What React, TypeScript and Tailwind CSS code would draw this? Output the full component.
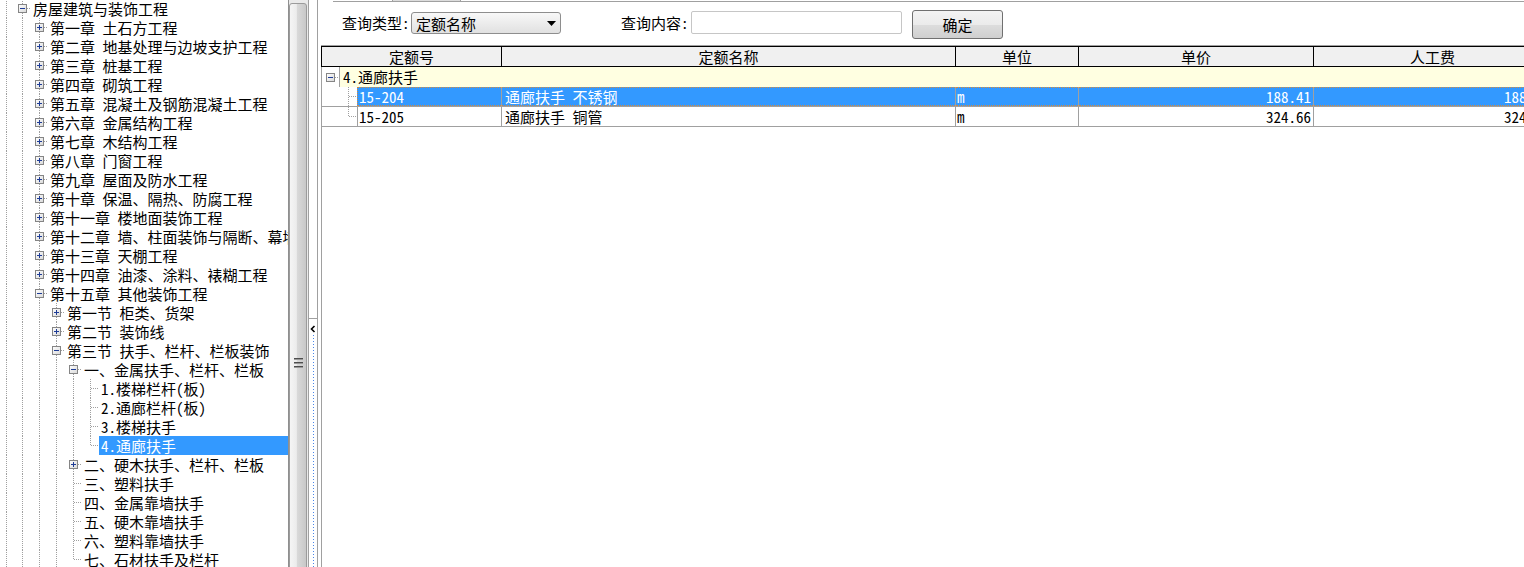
import React from 'react';

type TNode = { level: number; label: string; exp?: 'plus' | 'minus'; last?: boolean; selected?: boolean };

const tree: TNode[] = [
  { level: 0, label: '房屋建筑与装饰工程', exp: 'minus' },
  { level: 1, label: '第一章 土石方工程', exp: 'plus' },
  { level: 1, label: '第二章 地基处理与边坡支护工程', exp: 'plus' },
  { level: 1, label: '第三章 桩基工程', exp: 'plus' },
  { level: 1, label: '第四章 砌筑工程', exp: 'plus' },
  { level: 1, label: '第五章 混凝土及钢筋混凝土工程', exp: 'plus' },
  { level: 1, label: '第六章 金属结构工程', exp: 'plus' },
  { level: 1, label: '第七章 木结构工程', exp: 'plus' },
  { level: 1, label: '第八章 门窗工程', exp: 'plus' },
  { level: 1, label: '第九章 屋面及防水工程', exp: 'plus' },
  { level: 1, label: '第十章 保温、隔热、防腐工程', exp: 'plus' },
  { level: 1, label: '第十一章 楼地面装饰工程', exp: 'plus' },
  { level: 1, label: '第十二章 墙、柱面装饰与隔断、幕墙工程', exp: 'plus' },
  { level: 1, label: '第十三章 天棚工程', exp: 'plus' },
  { level: 1, label: '第十四章 油漆、涂料、裱糊工程', exp: 'plus' },
  { level: 1, label: '第十五章 其他装饰工程', exp: 'minus' },
  { level: 2, label: '第一节 柜类、货架', exp: 'plus' },
  { level: 2, label: '第二节 装饰线', exp: 'plus' },
  { level: 2, label: '第三节 扶手、栏杆、栏板装饰', exp: 'minus' },
  { level: 3, label: '一、金属扶手、栏杆、栏板', exp: 'minus' },
  { level: 4, label: '1.楼梯栏杆(板)' },
  { level: 4, label: '2.通廊栏杆(板)' },
  { level: 4, label: '3.楼梯扶手' },
  { level: 4, label: '4.通廊扶手', last: true, selected: true },
  { level: 3, label: '二、硬木扶手、栏杆、栏板', exp: 'plus' },
  { level: 3, label: '三、塑料扶手' },
  { level: 3, label: '四、金属靠墙扶手' },
  { level: 3, label: '五、硬木靠墙扶手' },
  { level: 3, label: '六、塑料靠墙扶手' },
  { level: 3, label: '七、石材扶手及栏杆', last: true },
];

const DOT = '#a0a0a0';

function Expander({ cx, cy, kind, id }: { cx: number; cy: number; kind: 'plus' | 'minus'; id: string }) {
  return (
    <g>
      <defs>
        <linearGradient id={id} x1="0" y1="0" x2="1" y2="1">
          <stop offset="0" stopColor="#ffffff" />
          <stop offset="1" stopColor="#d8d8d8" />
        </linearGradient>
      </defs>
      <rect x={cx - 3.5} y={cy - 3.5} width={8} height={8} fill={`url(#${id})`} stroke="#858585" />
      <line x1={cx - 2} x2={cx + 3} y1={cy + 0.5} y2={cy + 0.5} stroke="#1e3c96" />
      {kind === 'plus' && <line x1={cx + 0.5} x2={cx + 0.5} y1={cy - 2} y2={cy + 3} stroke="#1e3c96" />}
    </g>
  );
}

function LineCell({
  w,
  x,
  v,
  h,
  exp,
  id,
}: {
  w: number;
  x: number;
  v: 'full' | 'top' | 'none';
  h?: boolean;
  exp?: 'plus' | 'minus';
  id: string;
}) {
  return (
    <svg width={w} height={19} className="shrink-0" shapeRendering="crispEdges">
      {v !== 'none' && (
        <line x1={x + 0.5} x2={x + 0.5} y1={0} y2={v === 'full' ? 19 : 10} stroke={DOT} strokeDasharray="1 1" />
      )}
      {h && <line x1={x + 1} x2={w} y1={9.5} y2={9.5} stroke={DOT} strokeDasharray="1 1" />}
      {exp && <Expander cx={x} cy={9} kind={exp} id={id} />}
    </svg>
  );
}

function TreeRow({ node, idx }: { node: TNode; idx: number }) {
  const cells: React.ReactNode[] = [];
  cells.push(<LineCell key="m" w={14} x={6} v="full" id={`a${idx}m`} />);
  for (let k = 0; k < node.level; k++) {
    cells.push(<LineCell key={k} w={17} x={8} v="full" id={`a${idx}_${k}`} />);
  }
  cells.push(
    <LineCell key="own" w={17} x={8} v={node.last ? 'top' : 'full'} h exp={node.exp} id={`g${idx}`} />
  );
  return (
    <div className="flex h-[19px] whitespace-nowrap">
      {cells}
      <div
        className={
          node.selected
            ? 'min-w-0 flex-1 overflow-hidden bg-[#3399ff] pl-[2px] leading-[19px] text-white'
            : 'min-w-0 flex-1 overflow-hidden pl-[2px] leading-[19px] text-black'
        }
      >
        {node.label}
      </div>
    </div>
  );
}

function Tree() {
  return (
    <div className="h-full w-[288px] shrink-0 overflow-hidden bg-white">
      <div className="mt-[-1px] flex flex-col">
        {tree.map((n, i) => (
          <TreeRow key={i} node={n} idx={i} />
        ))}
      </div>
    </div>
  );
}

function ScrollBar() {
  return (
    <div className="h-full w-[19px] shrink-0 overflow-hidden bg-[#eaeaea]">
      <div className="mt-[3px] flex h-[720px] w-[18px] flex-col items-center rounded-[3px] border border-[#9b9b9b] bg-[linear-gradient(to_right,#f5f5f5_0%,#ececec_40%,#d9d9d9_45%,#c8c8c8_100%)] pt-[354px]">
        <svg width="9" height="11" shapeRendering="crispEdges">
          <rect x="0" y="0" width="9" height="1" fill="#4e4e4e" />
          <rect x="0" y="1" width="9" height="1" fill="#9a9a9a" />
          <rect x="0" y="4" width="9" height="1" fill="#4e4e4e" />
          <rect x="0" y="5" width="9" height="1" fill="#9a9a9a" />
          <rect x="0" y="8" width="9" height="1" fill="#4e4e4e" />
          <rect x="0" y="9" width="9" height="1" fill="#9a9a9a" />
        </svg>
      </div>
    </div>
  );
}

function Splitter() {
  return (
    <div className="flex h-full w-[8px] shrink-0 flex-col bg-white">
      <div className="h-[318px] shrink-0" />
      <div className="flex min-h-0 flex-1 flex-col border-t border-[#a0a0a0]">
        <svg width="8" height="16" className="shrink-0">
          <polyline points="5.5,7 2.5,10 5.5,13" fill="none" stroke="#000" strokeWidth="1.6" />
        </svg>
        <svg width="8" height="240" className="shrink-0" shapeRendering="crispEdges">
          <line x1="4.5" x2="4.5" y1="0" y2="240" stroke="#4a86e8" strokeDasharray="1 2" />
        </svg>
      </div>
    </div>
  );
}

const colW = ['w-[454px]', 'w-[123px]', 'w-[235px]', 'w-[238px]'];

function GridTreeCell({ v }: { v: 'full' | 'top' }) {
  return (
    <svg width="35" height="19" className="shrink-0" shapeRendering="crispEdges">
      <line x1="26.5" x2="26.5" y1="0" y2={v === 'full' ? 19 : 10} stroke={DOT} strokeDasharray="1 1" />
      <line x1="27" x2="35" y1="9.5" y2="9.5" stroke={DOT} strokeDasharray="1 1" />
    </svg>
  );
}

function Grid() {
  return (
    <div className="ml-[3px] mt-[6px] flex min-h-0 flex-1 flex-col overflow-hidden border-t border-[#a0a0a0]">
      {/* header */}
      <div className="flex h-[21px] w-[1231px] shrink-0 border-y border-l border-black bg-[#f0f0f0] leading-[19px] text-black">
        <div className="w-[180px] border-r border-black text-center">定额号</div>
        <div className="w-[454px] border-r border-black text-center">定额名称</div>
        <div className="w-[123px] border-r border-black text-center">单位</div>
        <div className="w-[235px] border-r border-black text-center">单价</div>
        <div className="w-[238px] border-r border-black text-center">人工费</div>
      </div>
      {/* group row */}
      <div className="flex h-[20px] w-[1231px] shrink-0 border-l border-[#a0a0a0]">
        <svg width="17" height="20" className="shrink-0" shapeRendering="crispEdges">
          <line x1="13" x2="17" y1="10.5" y2="10.5" stroke={DOT} strokeDasharray="1 1" />
          <Expander cx={8} cy={10} kind="minus" id="grp" />
        </svg>
        <div className="flex-1 border-l border-[#a0a0a0] bg-[#ffffe1] pl-[3px] leading-[20px] text-black">4.通廊扶手</div>
      </div>
      {/* row 1 selected */}
      <div className="flex h-[20px] w-[1231px] shrink-0 border-b border-l border-[#a0a0a0] leading-[17px]">
        <GridTreeCell v="full" />
        <div className="w-[145px] border-r border-[#a0a0a0]">
          <div className="h-full border-y border-l border-dotted border-[#d68a3c] bg-[#3399ff] pl-[1px] text-white">15-204</div>
        </div>
        <div className={`${colW[0]} border-r border-[#a0a0a0]`}>
          <div className="h-full border-y border-dotted border-[#d68a3c] bg-[#3399ff] pl-[3px] text-white">通廊扶手 不锈钢</div>
        </div>
        <div className={`${colW[1]} border-r border-[#a0a0a0]`}>
          <div className="h-full border-y border-dotted border-[#d68a3c] bg-[#3399ff] pl-[1px] text-white">m</div>
        </div>
        <div className={`${colW[2]} border-r border-[#a0a0a0]`}>
          <div className="h-full border-y border-dotted border-[#d68a3c] bg-[#3399ff] pr-[2px] text-right text-white">188.41</div>
        </div>
        <div className={`${colW[3]} border-r border-[#a0a0a0]`}>
          <div className="h-full border-y border-dotted border-[#d68a3c] bg-[#3399ff] pr-[2px] text-right text-white">188.41</div>
        </div>
      </div>
      {/* row 2 */}
      <div className="flex h-[20px] w-[1231px] shrink-0 border-b border-l border-[#a0a0a0] leading-[19px] text-black">
        <GridTreeCell v="top" />
        <div className="w-[145px] border-x border-[#a0a0a0] pl-[1px]">15-205</div>
        <div className={`${colW[0]} border-r border-[#a0a0a0] pl-[3px]`}>通廊扶手 铜管</div>
        <div className={`${colW[1]} border-r border-[#a0a0a0] pl-[1px]`}>m</div>
        <div className={`${colW[2]} border-r border-[#a0a0a0] pr-[2px] text-right`}>324.66</div>
        <div className={`${colW[3]} border-r border-[#a0a0a0] pr-[2px] text-right`}>324.66</div>
      </div>
      <div className="flex-1 border-l border-[#a0a0a0]" />
    </div>
  );
}

function RightPanel() {
  return (
    <div className="flex h-full min-w-0 flex-1 flex-col overflow-hidden bg-white text-black">
      <div className="ml-[15px] flex h-[2px] shrink-0">
        <div className="w-[59px] border-b border-[#a0a0a0]" />
        <div className="w-[69px] border-x border-b border-[#a0a0a0] bg-[#dcdcdc]" />
        <div className="flex-1 border-b border-[#a0a0a0]" />
      </div>
      <div className="mt-[8px] flex h-[29px] shrink-0 items-start pl-[24px]">
        <span className="mt-[3px] w-[69px] shrink-0 leading-[19px]">查询类型:</span>
        <div className="mt-[2px] flex h-[22px] w-[150px] shrink-0 items-center justify-between rounded-[3px] border border-[#8e8e8e] bg-gradient-to-b from-[#f8f8f8] to-[#e1e1e1] pl-[4px] pr-[4px]">
          <span className="leading-[19px]">定额名称</span>
          <svg width="9" height="5">
            <polygon points="0,0 9,0 4.5,5" fill="#000" />
          </svg>
        </div>
        <span className="ml-[60px] mt-[3px] w-[70px] shrink-0 leading-[19px]">查询内容:</span>
        <div className="mt-[1px] h-[23px] w-[211px] shrink-0 rounded-[2px] border border-[#c6c6c6] bg-white" />
        <button className="ml-[10px] h-[29px] w-[91px] shrink-0 rounded-[3px] border border-[#707070] bg-[linear-gradient(to_bottom,#f3f3f3_0%,#ebebeb_50%,#dddddd_51%,#cfcfcf_100%)] text-center leading-[19px] text-black">
          确定
        </button>
      </div>
      <Grid />
    </div>
  );
}

export default function App() {
  return (
    <div className="flex h-[567px] w-[1524px] overflow-hidden bg-white font-['Noto_Sans_Mono_CJK_SC','Noto_Sans_CJK_SC',sans-serif] text-[15px] text-black">
      <Tree />
      <div className="h-full w-[1px] shrink-0 bg-[#8f8f8f]" />
      <ScrollBar />
      <div className="h-full w-[1px] shrink-0 bg-[#a0a0a0]" />
      <Splitter />
      <div className="h-full w-[1px] shrink-0 bg-[#a0a0a0]" />
      <RightPanel />
    </div>
  );
}
